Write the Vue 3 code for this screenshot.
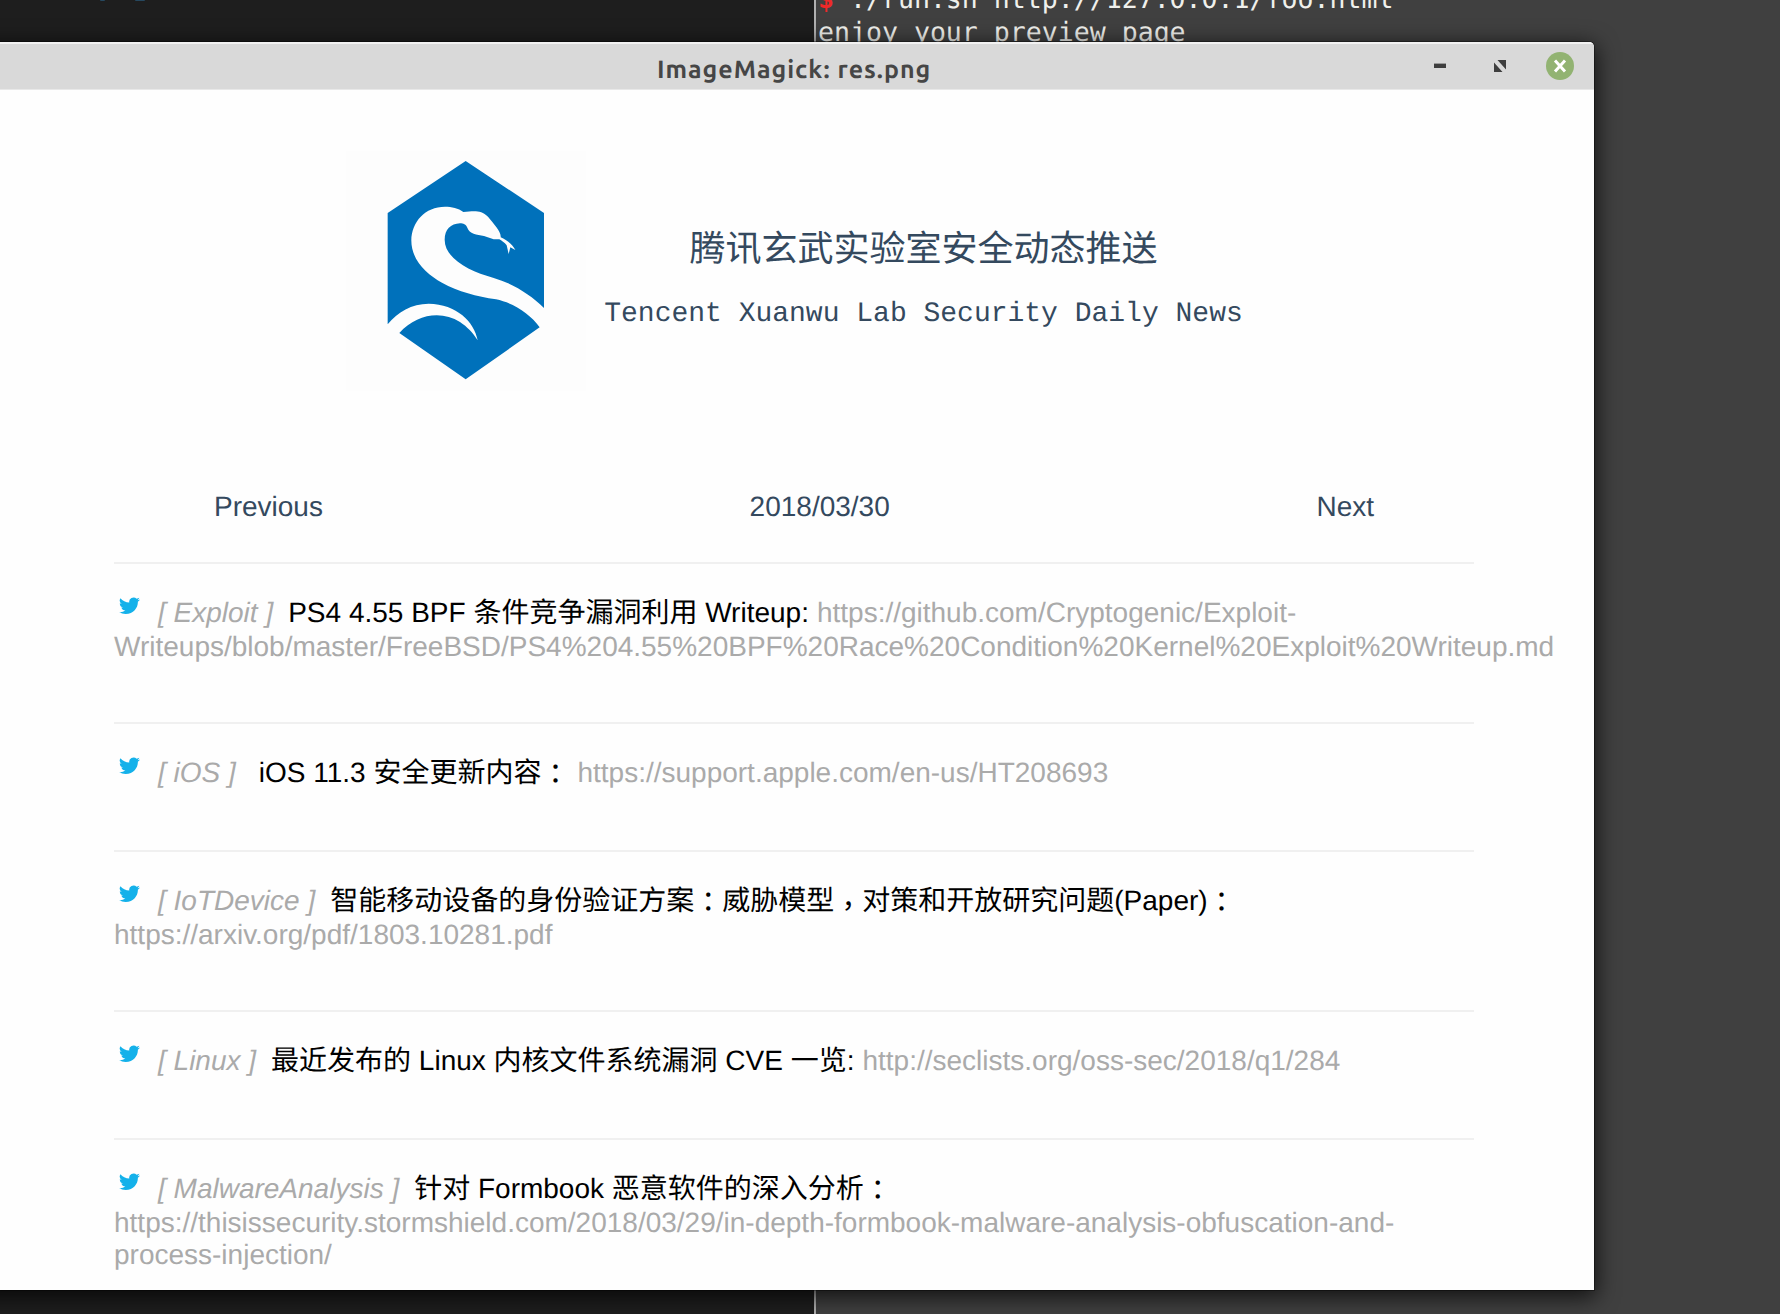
<script setup>
const entries = [
  {
    tag: '[ Exploit ]',
    title: 'PS4 4.55 BPF 条件竞争漏洞利用 Writeup:',
    link: 'https://github.com/Cryptogenic/Exploit-',
    rest: ['Writeups/blob/master/FreeBSD/PS4%204.55%20BPF%20Race%20Condition%20Kernel%20Exploit%20Writeup.md'],
  },
  { tag: '[ iOS ]', wide: true, title: 'iOS 11.3 安全更新内容：', link: 'https://support.apple.com/en-us/HT208693', rest: [] },
  {
    tag: '[ IoTDevice ]',
    title: '智能移动设备的身份验证方案：威胁模型，对策和开放研究问题(Paper)：',
    link: '',
    rest: ['https://arxiv.org/pdf/1803.10281.pdf'],
  },
  { tag: '[ Linux ]', title: '最近发布的 Linux 内核文件系统漏洞 CVE 一览:', link: 'http://seclists.org/oss-sec/2018/q1/284', rest: [] },
  {
    tag: '[ MalwareAnalysis ]',
    title: '针对 Formbook 恶意软件的深入分析：',
    link: '',
    rest: [
      'https://thisissecurity.stormshield.com/2018/03/29/in-depth-formbook-malware-analysis-obfuscation-and-',
      'process-injection/',
    ],
  },
]

// Full-width punctuation is set centred in its cell, so it gets its own run.
const runs = (text) => text.split(/([：，])/).filter(Boolean)
const runClass = (run) => ({ punct: run === '：' || run === '，', comma: run === '，' })
</script>

<template>
  <div class="desktop">
    <div class="pane editor">
      <i class="speck speck-a"></i><i class="speck speck-b"></i>
    </div>
    <div class="pane terminal">
      <div class="cmd"><b>$</b> ./run.sh http://127.0.0.1/foo.html</div>
      <div class="cmd">enjoy your preview page</div>
    </div>

    <section class="window">
      <header class="titlebar">
        <span class="caption">ImageMagick: res.png</span>
        <div class="controls">
          <svg width="28" height="28" viewBox="0 0 28 28"><rect x="8" y="11.6" width="12" height="4.4" fill="#3e3e3e" /></svg>
          <svg width="28" height="28" viewBox="0 0 28 28">
            <path d="M11.5 8H20V17.5ZM8 10.5V20H16.5Z" fill="#3e3e3e" />
          </svg>
          <svg width="28" height="28" viewBox="0 0 28 28">
            <circle cx="14" cy="14" r="14" fill="#92b372" />
            <path d="M9 8.6L19 19.4M19 8.6L9 19.4" stroke="#fff" stroke-width="3" />
          </svg>
        </div>
      </header>

      <main class="page">
        <div class="brand">
          <svg class="logo" width="240" height="240" viewBox="48 32 720 720">
            <path fill="#0071bb" d="M407 62L642 218V503C600 462 550 430 489 412C420 394 344 355 344 298C344 268 362 250 390 249C400 249 408 252 412 262C418 280 440 283 462 287L491 297L508 297C514 301 524 307 530 315L536 341L541 321L556 329C548 314 533 300 512 291C514 272 490 250 474 229C452 208 432 212 400 215C385 203 365 199 345 199C285 199 245 245 244 300C244 360 290 402 336 427C385 455 440 467 498 477C550 488 600 520 629 561L407 717L208 578C260 520 335 510 390 545C412 560 428 576 443 600C433 545 380 491 296 490C245 491 203 514 173 552V218Z" />
          </svg>
          <div class="names">
            <h1>腾讯玄武实验室安全动态推送</h1>
            <p>Tencent Xuanwu Lab Security Daily News</p>
          </div>
        </div>

        <nav class="pager"><a>Previous</a><a>2018/03/30</a><a>Next</a></nav>

        <article v-for="e in entries" :key="e.tag" class="entry">
          <div class="line first">
            <svg class="bird" width="21" height="17" viewBox="0 1.6 24 20.2" preserveAspectRatio="none">
              <path fill="#14b1ea" d="M23.95 4.57a10 10 0 0 1-2.82.77 4.96 4.96 0 0 0 2.16-2.72c-.95.55-2 .95-3.13 1.18a4.92 4.92 0 0 0-8.38 4.48C7.69 8.1 4.07 6.13 1.64 3.16a4.92 4.92 0 0 0 1.52 6.57 4.9 4.9 0 0 1-2.23-.61v.06a4.92 4.92 0 0 0 3.95 4.83 5 5 0 0 1-2.21.08 4.94 4.94 0 0 0 4.6 3.42A9.87 9.87 0 0 1 0 19.54a13.99 13.99 0 0 0 7.56 2.21c9.05 0 14-7.5 14-13.98 0-.21 0-.42-.02-.63a9.94 9.94 0 0 0 2.46-2.55z" />
            </svg>
            <em :class="{ wide: e.wide }">{{ e.tag }}</em>
            <span class="text"><span v-for="(r, i) in runs(e.title)" :key="i" :class="runClass(r)">{{ r }}</span></span>
            <a v-if="e.link">{{ e.link }}</a>
          </div>
          <div v-for="l in e.rest" :key="l" class="line"><a>{{ l }}</a></div>
        </article>
      </main>
    </section>
  </div>
</template>

<style>
body { margin: 0; overflow: hidden; }
</style>

<style scoped>
.desktop {
  position: relative;
  display: flex;
  width: 1780px;
  height: 1314px;
  overflow: hidden;
  background: #404040;
  text-rendering: geometricPrecision;
}
.pane { box-sizing: border-box; overflow: hidden; }
.editor { position: relative; width: 814px; background: #1e1e1e; }
.speck { position: absolute; top: -1px; height: 2px; background: #26485f; border-radius: 1px; }
.speck-a { left: 100px; width: 5px; }
.speck-b { left: 135px; width: 10px; }
.terminal {
  flex: 1;
  border-left: 2px solid #b0b0b0;
  padding-left: 2px;
  background: #404040;
}
.cmd {
  height: 33px;
  font: 26.55px/33px "DejaVu Sans Mono", monospace;
  color: #f0f0ec;
  white-space: pre;
}
.cmd:first-child { margin-top: -17px; }
.cmd b { color: #ef2929; }

.window {
  position: absolute;
  left: -20px;
  top: 42px;
  width: 1614px;
  height: 1248px;
  box-sizing: border-box;
  border-radius: 5px 5px 0 0;
  background: #fefefe;
  box-shadow: 0 0 0 1px rgba(0, 0, 0, .35), 0 5px 22px 2px rgba(0, 0, 0, .75);
  overflow: hidden;
}
.titlebar {
  display: flex;
  align-items: center;
  justify-content: space-between;
  height: 48px;
  box-sizing: border-box;
  padding: 0 20px 0 677px;
  border-top: 2px solid #f2f2f2;
  border-bottom: 1px solid #e8e8e8;
  background: #d9d9d9;
}
.caption {
  padding-top: 4px;
  font: 600 25px/34px Ubuntu, "Noto Sans", sans-serif;
  letter-spacing: 0.98px;
  color: #464646;
  white-space: pre;
}
.controls { display: flex; gap: 32px; padding-bottom: 1px; }
.controls svg { display: block; }

.page {
  padding: 61px 0 0 134px;
  font: 28px/32px "Liberation Sans", "Noto Sans CJK SC", sans-serif;
}
.brand { display: flex; padding-left: 232px; height: 240px; }
.logo { background: #fdfdfd; }
.names { margin-left: 18px; padding-top: 69px; width: 639px; text-align: center; color: #34495e; }
h1 {
  margin: 0;
  font: 400 36px/52px "Noto Sans CJK SC", sans-serif;
}
.names p {
  margin: 26px 0 0;
  font: 28px/34px "Liberation Mono", monospace;
  white-space: nowrap;
}
.pager {
  display: flex;
  justify-content: space-between;
  box-sizing: border-box;
  width: 1360px;
  height: 171px;
  padding: 100px 100px 0 100px;
  color: #34495e;
}
.entry {
  box-sizing: border-box;
  width: 1360px;
  padding: 33px 0 61px;
  border-top: 2px solid #f0f0f0;
}
.line { height: 32px; white-space: nowrap; color: #aaa; }
.first { display: flex; }
.first + .line { padding-top: 2px; }
.entry:has(.line + .line) { padding-bottom: 59px; }
.bird { flex: none; margin: 0 18px 0 5px; }
em { margin-right: 15px; white-space: pre; }
em.wide { margin-right: 23px; }
.text { margin-right: 8px; color: #000; }
.punct {
  font-family: "Noto Sans CJK TC", sans-serif;
  line-height: 0;
  vertical-align: -2px;
}
.comma { vertical-align: -6px; }
</style>
